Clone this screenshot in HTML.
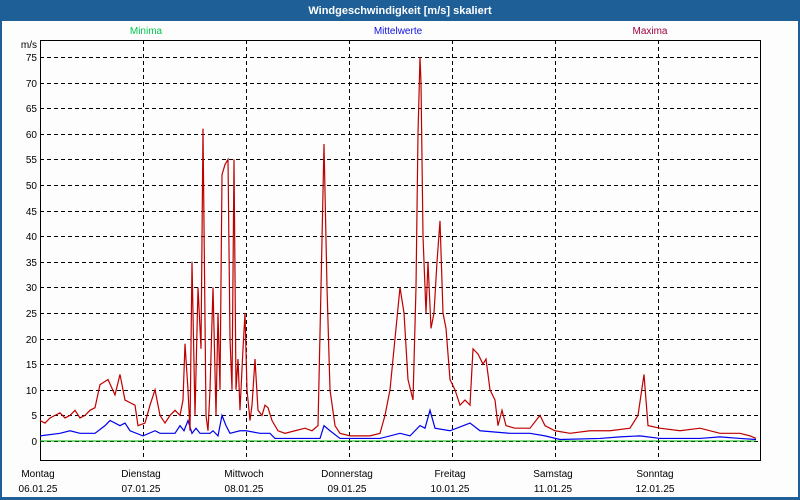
<!DOCTYPE html>
<html><head><meta charset="utf-8"><style>
html,body{margin:0;padding:0;width:800px;height:500px;overflow:hidden;background:#1e5f97;}
svg{display:block;font-family:"Liberation Sans",sans-serif;}
</style></head><body>
<svg width="800" height="500" xmlns="http://www.w3.org/2000/svg">
<rect x="0" y="0" width="800" height="500" fill="#1e5f97"/>
<rect x="2" y="21" width="796" height="476" fill="#fcfdfc"/>
<text x="400" y="14" font-size="11" font-weight="bold" fill="#fff" text-anchor="middle">Windgeschwindigkeit [m/s] skaliert</text>
<text x="146" y="34" font-size="10" fill="#00c850" text-anchor="middle">Minima</text>
<text x="398" y="34" font-size="10" fill="#1010e0" text-anchor="middle">Mittelwerte</text>
<text x="650" y="34" font-size="10" fill="#a00040" text-anchor="middle">Maxima</text>
<text x="37" y="48" font-size="10" fill="#000" text-anchor="end">m/s</text>
<g stroke="#000" stroke-width="1" stroke-dasharray="4,3" fill="none">
<path d="M40 57.5H760M40 83.5H760M40 108.5H760M40 134.5H760M40 159.5H760M40 185.5H760M40 211.5H760M40 236.5H760M40 262.5H760M40 287.5H760M40 313.5H760M40 339.5H760M40 364.5H760M40 390.5H760M40 415.5H760M40 441.5H760"/>
<path d="M143.5 40V460M246.5 40V460M349.5 40V460M452.5 40V460M555.5 40V460M658.5 40V460"/>
</g>
<rect x="40.5" y="40.5" width="720" height="420" fill="none" stroke="#000" stroke-width="1"/>
<g font-size="10" fill="#000" text-anchor="end">
<text x="37" y="61">75</text><text x="37" y="87">70</text><text x="37" y="112">65</text><text x="37" y="138">60</text><text x="37" y="163">55</text><text x="37" y="189">50</text><text x="37" y="215">45</text><text x="37" y="240">40</text><text x="37" y="266">35</text><text x="37" y="291">30</text><text x="37" y="317">25</text><text x="37" y="343">20</text><text x="37" y="368">15</text><text x="37" y="394">10</text><text x="37" y="419">5</text><text x="37" y="445">0</text>
</g>
<g font-size="10" fill="#000" text-anchor="middle">
<text x="38" y="477">Montag</text><text x="38" y="492">06.01.25</text>
<text x="141" y="477">Dienstag</text><text x="141" y="492">07.01.25</text>
<text x="244" y="477">Mittwoch</text><text x="244" y="492">08.01.25</text>
<text x="347" y="477">Donnerstag</text><text x="347" y="492">09.01.25</text>
<text x="450" y="477">Freitag</text><text x="450" y="492">10.01.25</text>
<text x="553" y="477">Samstag</text><text x="553" y="492">11.01.25</text>
<text x="655" y="477">Sonntag</text><text x="655" y="492">12.01.25</text>
</g>
<g transform="translate(0,441) scale(1,-5.12)" fill="none">
<polyline vector-effect="non-scaling-stroke" stroke="#00b000" stroke-width="1" points="40,0 756,0"/>
<polyline vector-effect="non-scaling-stroke" stroke="#0000ee" stroke-width="1.2" points="40,1 60,1.5 70,2 80,1.5 95,1.5 105,3 110,4 120,3 125,3.5 130,2 143,1 155,2 160,1.5 175,1.5 180,3 184,2 188,4 192,1.5 196,2.5 200,1.5 210,1.5 213,2 218,1 222,5 226,3 230,1.5 240,2 246,2 260,1.5 270,1.5 275,0.5 290,0.5 300,0.5 320,0.5 324,3 330,2 340,0.5 380,0.5 400,1.5 410,1 420,3 425,2.5 430,6 435,2.5 450,2 470,3.5 480,2 510,1.5 530,1.5 545,1 560,0.3 600,0.5 620,0.8 640,1 660,0.5 700,0.5 720,0.8 740,0.5 756,0.3"/>
<polyline vector-effect="non-scaling-stroke" stroke="#c00000" stroke-width="1.2" points="40,4 45,3.5 50,4.5 55,5 60,5.5 65,4.5 70,5 75,6 80,4.5 85,5 90,6 95,6.5 100,11 108,12 115,9 120,13 125,8 130,7.5 135,7 138,3 145,3.5 150,7 155,10 160,5 165,3.5 170,5 175,6 180,5 183,8 185,19 188,10 190,2 192,35 195,5 198,30 201,18 203,61 206,5 208,2 210,10 213,30 214,22 216,5 218,25 220,10 222,52 225,54 228,55 230,20 232,10 234,55 236,10 238,16 240,6 243,18 245,25 247,10 250,4 252,7 255,16 258,6 262,5 265,7 268,6.5 272,4 278,2 285,1.5 295,2 305,2.5 312,2 318,3 321,30 324,58 327,30 330,10 335,3 340,1.5 350,1 370,1 380,1.5 385,5 390,10 395,20 400,30 404,25 408,12 413,8 416,30 418,60 420,75 421,70 423,40 426,25 428,35 431,22 434,25 437,35 440,43 443,25 446,22 450,12 455,10 460,7 465,8 470,7 473,18 478,17 483,15 486,16 490,10 495,8 498,3 502,6 506,3 515,2.5 530,2.5 540,5 545,3 555,2 570,1.5 590,2 610,2 630,2.5 638,5 644,13 648,3 660,2.5 680,2 700,2.5 720,1.5 740,1.5 750,1 756,0.5"/>
</g>
</svg>
</body></html>
